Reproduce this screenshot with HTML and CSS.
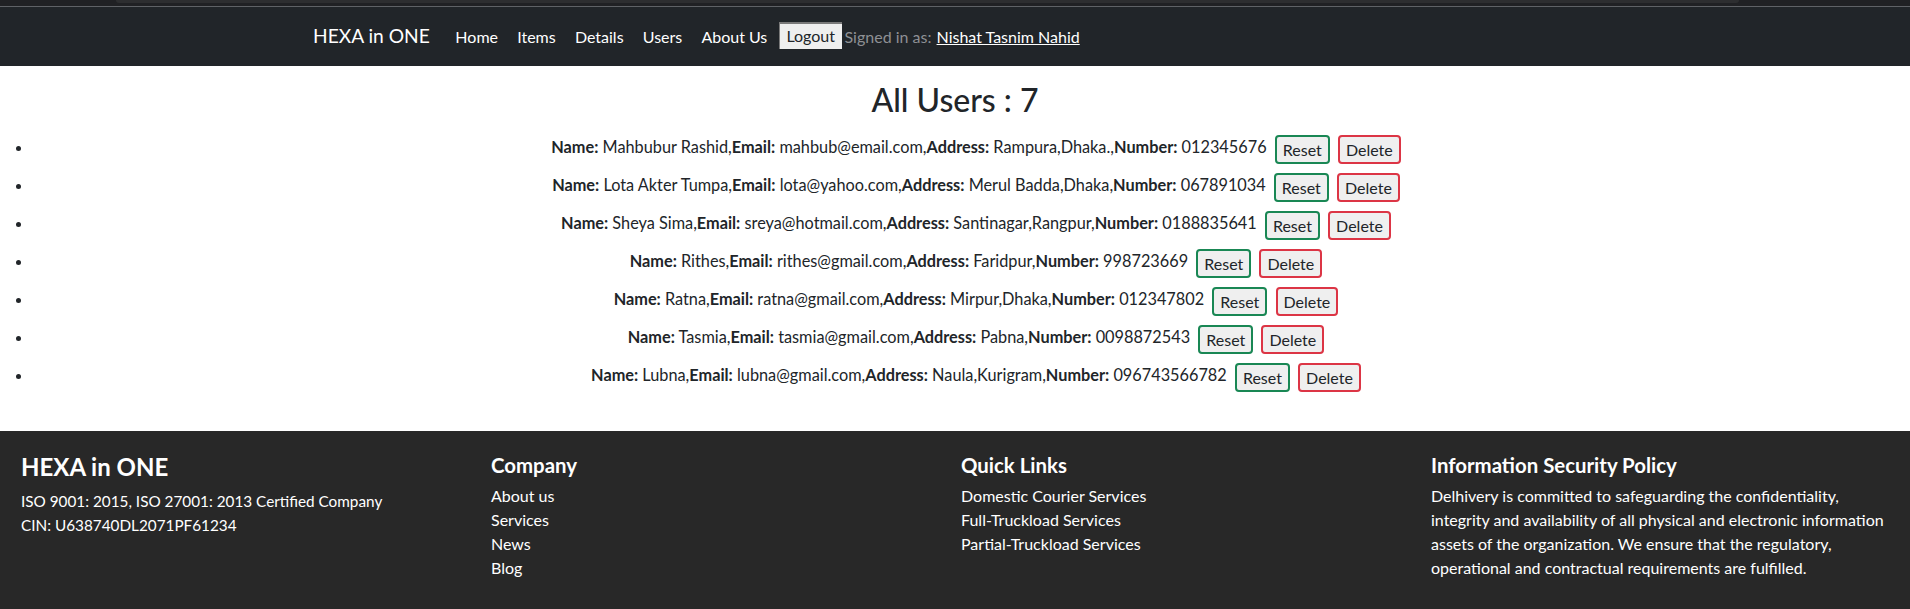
FILE: index.html
```html
<!DOCTYPE html>
<html lang="en">
<head>
<meta charset="utf-8">
<title>HEXA in ONE - Users</title>
<link rel="stylesheet" href="styles.css">
</head>
<body>
<div class="chrome-strip"><div class="chrome-bar"></div></div>
<nav class="navbar">
  <div class="nav-inner">
    <a class="brand" href="#">HEXA in ONE</a>
    <ul class="nav-links">
      <li><a href="#">Home</a></li>
      <li><a href="#">Items</a></li>
      <li><a href="#">Details</a></li>
      <li><a href="#">Users</a></li>
      <li><a href="#">About Us</a></li>
    </ul>
    <button class="logout">Logout</button>
    <span class="signed">Signed in as: <a href="#">Nishat Tasnim Nahid</a></span>
  </div>
</nav>
<main>
  <h2 class="title">All Users : 7</h2>
  <ul class="users">
    <li><b>Name:</b> Mahbubur Rashid,<b>Email:</b> mahbub@email.com,<b>Address:</b> Rampura,Dhaka.,<b>Number:</b> 012345676 <button class="btn reset">Reset</button> <button class="btn del">Delete</button></li>
    <li><b>Name:</b> Lota Akter Tumpa,<b>Email:</b> lota@yahoo.com,<b>Address:</b> Merul Badda,Dhaka,<b>Number:</b> 067891034 <button class="btn reset">Reset</button> <button class="btn del">Delete</button></li>
    <li><b>Name:</b> Sheya Sima,<b>Email:</b> sreya@hotmail.com,<b>Address:</b> Santinagar,Rangpur,<b>Number:</b> 0188835641 <button class="btn reset">Reset</button> <button class="btn del">Delete</button></li>
    <li><b>Name:</b> Rithes,<b>Email:</b> rithes@gmail.com,<b>Address:</b> Faridpur,<b>Number:</b> 998723669 <button class="btn reset">Reset</button> <button class="btn del">Delete</button></li>
    <li><b>Name:</b> Ratna,<b>Email:</b> ratna@gmail.com,<b>Address:</b> Mirpur,Dhaka,<b>Number:</b> 012347802 <button class="btn reset">Reset</button> <button class="btn del">Delete</button></li>
    <li><b>Name:</b> Tasmia,<b>Email:</b> tasmia@gmail.com,<b>Address:</b> Pabna,<b>Number:</b> 0098872543 <button class="btn reset">Reset</button> <button class="btn del">Delete</button></li>
    <li><b>Name:</b> Lubna,<b>Email:</b> lubna@gmail.com,<b>Address:</b> Naula,Kurigram,<b>Number:</b> 096743566782 <button class="btn reset">Reset</button> <button class="btn del">Delete</button></li>
  </ul>
</main>
<footer class="footer">
  <div class="col">
    <h4 class="f-brand">HEXA in ONE</h4>
    <p class="iso">ISO 9001: 2015, ISO 27001: 2013 Certified Company</p>
    <p class="iso">CIN: U638740DL2071PF61234</p>
  </div>
  <div class="col">
    <h5>Company</h5>
    <a href="#">About us</a>
    <a href="#">Services</a>
    <a href="#">News</a>
    <a href="#">Blog</a>
  </div>
  <div class="col">
    <h5>Quick Links</h5>
    <a href="#">Domestic Courier Services</a>
    <a href="#">Full-Truckload Services</a>
    <a href="#">Partial-Truckload Services</a>
  </div>
  <div class="col">
    <h5>Information Security Policy</h5>
    <p>Delhivery is committed to safeguarding the confidentiality, integrity and availability of all physical and electronic information assets of the organization. We ensure that the regulatory, operational and contractual requirements are fulfilled.</p>
  </div>
</footer>
</body>
</html>
```

FILE: styles.css
```css
* { box-sizing: border-box; }
html, body { margin: 0; padding: 0; }
body {
  font-family: Lato, "Noto Sans", Arial, sans-serif;
  font-size: 16px;
  line-height: 1.5;
  color: #212529;
  background: #fff;
}
.chrome-strip {
  height: 7px;
  background: #202124;
  border-bottom: 1px solid #5f6266;
  padding: 0 171px 0 116px;
}
.chrome-bar {
  height: 3px;
  background: #2d2e30;
  border-radius: 0 0 4px 4px;
}
.navbar {
  background: #212529;
  height: 59px;
  display: flex;
  align-items: center;
}
.nav-inner {
  display: flex;
  align-items: center;
  padding-left: 313px;
}
.brand {
  color: #fff;
  text-decoration: none;
  font-size: 19.2px;
  margin-right: 16px;
}
.nav-links {
  list-style: none;
  margin: 0;
  padding: 0;
  display: flex;
}
.nav-links a {
  display: block;
  color: #fff;
  text-decoration: none;
  padding: 8px 9.6px;
}
.logout {
  font: inherit;
  font-size: 16px;
  line-height: 20px;
  color: #212529;
  background: #efefef;
  border: 0;
  border-top: 2px solid #7a7a7a;
  border-left: 1px solid #7a7a7a;
  height: 27px;
  padding: 0 6.5px 2px;
  margin-left: 2px;
  margin-top: -2px;
}
.signed {
  color: #8e9094;
  margin-left: 3px;
}
.signed a { color: #fff; margin-left: 1px; }
main { padding: 0; }
.title {
  text-align: center;
  font-size: 32px;
  font-weight: 500;
  line-height: 1.2;
  margin: 15px 0 9px;
}
.users {
  margin: 0 0 37px;
  padding-left: 33px;
}
.users li {
  text-align: center;
  text-indent: 9px;
  height: 38px;
  padding-top: 4px;
  line-height: 30px;
  font-size: 16.3px;
}
.users b { font-weight: 700; }
.btn {
  font: inherit;
  font-size: 16px;
  line-height: 21px;
  height: 29px;
  padding: 2px 6px;
  border: 2px solid;
  border-radius: 4px;
  background: #efefef;
  color: #212529;
  vertical-align: middle;
  margin-left: 4px;
  text-indent: 0;
}
.reset { border-color: #198754; }
.del { border-color: #dc3545; }
.footer {
  background: #282828;
  color: #fff;
  display: grid;
  grid-template-columns: repeat(4, 1fr);
  padding: 22px 15px 30px;
  min-height: 180px;
}
.col { padding: 0 6px; display: flex; flex-direction: column; align-items: flex-start; }
.col h4, .col h5 { margin: 0 0 6px; font-weight: 700; line-height: 1.2; }
.col h4 { font-size: 24px; margin-bottom: 6.5px; }
.col h5 { font-size: 20.4px; }
.col p { margin: 0; }
.col .iso { font-size: 15.3px; line-height: 24px; }
.col a { color: #fff; text-decoration: none; }
```
